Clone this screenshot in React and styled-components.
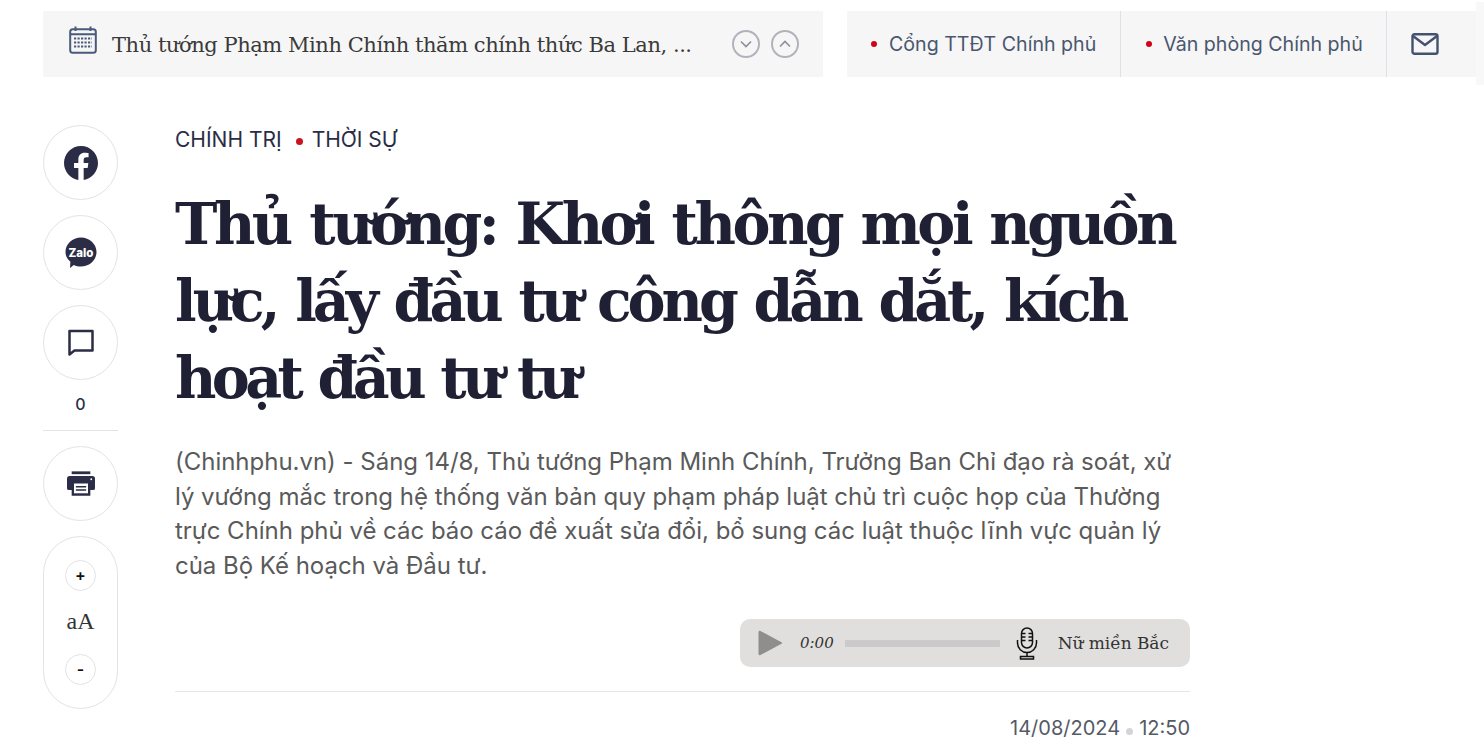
import React from 'react';
import styled, { createGlobalStyle } from 'styled-components';

const GlobalStyle = createGlobalStyle`
  html, body {
    margin: 0;
    padding: 0;
    background: #fff;
    overflow: hidden;
  }
  * { box-sizing: border-box; }
`;

const SERIF = `"DejaVu Serif", "Liberation Serif", serif`;
const SANS = `Inter, "Liberation Sans", sans-serif`;

const App = () => (
  <Page>
    <GlobalStyle />
    <TopBar>
      <NewsBox>
        <CalendarSlot><CalendarIcon /></CalendarSlot>
        <NewsTitle>Thủ tướng Phạm Minh Chính thăm chính thức Ba Lan, ...</NewsTitle>
        <Arrows>
          <RoundArrow><Chevron d="M6 9l6 6 6-6" /></RoundArrow>
          <RoundArrow><Chevron d="M6 15l6-6 6 6" /></RoundArrow>
        </Arrows>
      </NewsBox>
      <LinksBox>
        <LinkCell><Dot />Cổng TTĐT Chính phủ</LinkCell>
        <LinkCell><Dot />Văn phòng Chính phủ</LinkCell>
        <MailCell><MailIcon /></MailCell>
        <EdgeStrip />
      </LinksBox>
    </TopBar>

    <Body>
      <Side>
        <Circle><FacebookIcon /></Circle>
        <Circle><ZaloIcon /></Circle>
        <Circle><CommentIcon /></Circle>
        <Count>0</Count>
        <Rule />
        <Circle><PrintIcon /></Circle>
        <FontPill>
          <SmallCircle>+</SmallCircle>
          <FontLabel>aA</FontLabel>
          <SmallCircle>-</SmallCircle>
        </FontPill>
      </Side>

      <Article>
        <Crumbs>
          <span>CHÍNH TRỊ</span>
          <CrumbDot />
          <span>THỜI SỰ</span>
        </Crumbs>
        <Headline>
          <HeadLine $spacing={-3.5}>Thủ tướng: Khơi thông mọi nguồn</HeadLine>
          <HeadLine $spacing={-4.05}>lực, lấy đầu tư công dẫn dắt, kích</HeadLine>
          <HeadLine $spacing={-4.6}>hoạt đầu tư tư</HeadLine>
        </Headline>
        <Sapo>
          (Chinhphu.vn) - Sáng 14/8, Thủ tướng Phạm Minh Chính, Trưởng Ban Chỉ đạo rà soát, xử<br />
          lý vướng mắc trong hệ thống văn bản quy phạm pháp luật chủ trì cuộc họp của Thường<br />
          trực Chính phủ về các báo cáo đề xuất sửa đổi, bổ sung các luật thuộc lĩnh vực quản lý<br />
          của Bộ Kế hoạch và Đầu tư.
        </Sapo>
        <PlayerRow>
          <Player>
            <PlayIcon />
            <Time>0:00</Time>
            <Track />
            <MicIcon />
            <Voice>Nữ miền Bắc</Voice>
          </Player>
        </PlayerRow>
        <Meta>
          14/08/2024<MetaDot />12:50
        </Meta>
      </Article>
    </Body>
  </Page>
);

export default App;

const CalendarIcon = () => (
  <svg width="28" height="28" viewBox="0 0 28 28" fill="none" stroke="#4a5a7a">
    <rect x="1.2" y="3.2" width="25.6" height="23.6" rx="2.5" strokeWidth="2" />
    <path d="M1.5 8.2h25M6.5 0.500v4.500M21.500 0.500v4.500" strokeWidth="2" />
    <path d="M5 12.500h18M5 16.500h18M5 20.500h18" strokeWidth="2.2" strokeDasharray="2.2 1.3" />
  </svg>
);

const Chevron = ({ d }) => (
  <svg width="20" height="20" viewBox="0 0 24 24" fill="none" stroke="#8f8f9c" strokeWidth="2">
    <path d={d} />
  </svg>
);

const MailIcon = () => (
  <svg width="28" height="22" viewBox="0 0 28 22" fill="none" stroke="#44526f" strokeWidth="2.4" strokeLinejoin="round">
    <rect x="1.500" y="1.300" width="25" height="19.400" rx="2" />
    <path d="M2 3l12 9 12-9" />
  </svg>
);

const FacebookIcon = () => (
  <svg width="34" height="34" viewBox="0 0 24 24" fill="#2a2d45">
    <path d="M24 12.07C24 5.4 18.63 0 12 0S0 5.4 0 12.07c0 6.03 4.39 11.02 10.13 11.93v-8.44H7.08v-3.49h3.05V9.41c0-3.02 1.79-4.69 4.53-4.69 1.31 0 2.68.24 2.68.24v2.96h-1.51c-1.49 0-1.95.93-1.95 1.88v2.27h3.33l-.53 3.49h-2.8V24C19.61 23.09 24 18.1 24 12.07z" />
  </svg>
);

const ZaloIcon = () => (
  <svg width="32" height="32" viewBox="0 0 32 32">
    <path d="M16 0.500C24.600 0.500 31.500 7 31.500 15S24.600 29.500 16 29.500C13.500 29.500 11 29 8.800 27.900L5 31L5.400 24.800C2.300 22.100 0.500 18.800 0.500 15C0.500 7 7.400 0.500 16 0.500Z" fill="#2a2d45" />
    <text x="16" y="19.500" textAnchor="middle" fontFamily="Inter, sans-serif" fontWeight="800" fontSize="11.500" fill="#fff">Zalo</text>
  </svg>
);

const CommentIcon = () => (
  <svg width="28" height="28" viewBox="0 0 28 28" fill="none" stroke="#2a2d45" strokeWidth="2.500" strokeLinejoin="round">
    <path d="M2.500 2h23v19.500H7.500l-5 4z" />
  </svg>
);

const PrintIcon = () => (
  <svg width="28" height="25" viewBox="0 0 30 26">
    <path d="M5 0h20v3H5z" fill="#2a2d45" />
    <path d="M3 5h24a3 3 0 0 1 3 3v10a2 2 0 0 1-2 2h-3v6H5v-6H2a2 2 0 0 1-2-2V8a3 3 0 0 1 3-3z" fill="#2a2d45" />
    <rect x="7.500" y="13" width="15" height="10.500" fill="#fff" />
    <path d="M9.500 16.500h11M9.500 20h11" stroke="#2a2d45" strokeWidth="1.500" />
    <circle cx="26" cy="8.500" r="1" fill="#fff" />
  </svg>
);

const PlayIcon = () => (
  <svg width="24" height="26" viewBox="0 0 24 26">
    <path d="M2.500 1L23 12a1 1 0 0 1 0 2L2.500 25a1.500 1.500 0 0 1-2-1V2a1.500 1.500 0 0 1 2-1z" fill="#8e8e8e" />
  </svg>
);

const MicIcon = () => (
  <svg width="22" height="33" viewBox="0 0 22 33" fill="none" stroke="#111" strokeWidth="1.500">
    <rect x="5.500" y="1" width="11" height="20" rx="5.500" />
    <path d="M5.500 6.500h4M5.500 10h4M5.500 13.500h4M12.500 6.500h4M12.500 10h4M12.500 13.500h4" />
    <path d="M1.500 13v3a9.500 9.500 0 0 0 19 0v-3" />
    <path d="M11 25.500V29M4.500 29.500h13v2.500h-13z" />
  </svg>
);

const Page = styled.div`
  width: 1484px;
  height: 745px;
  overflow: hidden;
  background: #fff;
`;

const TopBar = styled.div`
  display: flex;
  align-items: flex-start;
  gap: 24px;
  padding: 11px 0 0 43px;
`;

const NewsBox = styled.div`
  width: 780px;
  height: 66px;
  background: #f6f6f6;
  display: flex;
  align-items: center;
  padding: 0 24px 0 26px;
`;

const CalendarSlot = styled.div`
  display: flex;
  margin-top: -9px;
`;

const NewsTitle = styled.div`
  flex: 1;
  margin-left: 15px;
  padding-top: 2px;
  font-family: ${SERIF};
  font-size: 21px;
  letter-spacing: -0.45px;
  color: #3a3a3a;
  white-space: nowrap;
`;

const Arrows = styled.div`
  display: flex;
  gap: 11px;
`;

const RoundArrow = styled.div`
  width: 28px;
  height: 28px;
  border: 2px solid #b2b2bc;
  border-radius: 50%;
  display: flex;
  align-items: center;
  justify-content: center;
`;

const LinksBox = styled.div`
  flex: 1;
  height: 66px;
  background: #f6f6f6;
  display: flex;
`;

const LinkCell = styled.div`
  display: flex;
  align-items: center;
  gap: 12px;
  padding: 0 24px;
  font-family: ${SANS};
  font-size: 19.6px;
  color: #4a566f;
  border-right: 1px solid #dfe0ea;
  white-space: nowrap;

  & + & {
    gap: 11px;
    padding: 0 23px 0 25px;
  }
`;

const MailCell = styled.div`
  flex: 1;
  display: flex;
  align-items: center;
  padding-left: 24px;
`;

const EdgeStrip = styled.div`
  width: 8px;
  margin: -9px 0 -8px;
  background: #f8f8f8;
`;

const Dot = styled.span`
  display: inline-block;
  width: 6px;
  height: 6px;
  border-radius: 50%;
  background: #d0021b;
  flex-shrink: 0;
`;

const CrumbDot = styled(Dot)`
  width: 7px;
  height: 7px;
  background: #c8141e;
  margin: 2px 9px 0 14px;
`;

const Body = styled.div`
  display: flex;
  gap: 57px;
  padding: 48px 0 0 43px;
`;

const Side = styled.div`
  width: 75px;
  display: flex;
  flex-direction: column;
  align-items: center;
`;

const Circle = styled.div`
  width: 75px;
  height: 75px;
  border: 1px solid #e3e3e3;
  border-radius: 50%;
  display: flex;
  align-items: center;
  justify-content: center;
  margin-bottom: 15px;
`;

const Count = styled.div`
  font-family: ${SANS};
  font-weight: 500;
  font-size: 16px;
  line-height: 18px;
  color: #2a2d45;
`;

const Rule = styled.div`
  width: 100%;
  height: 1px;
  background: #e3e3e3;
  margin: 17px 0 15px;
`;

const FontPill = styled.div`
  width: 75px;
  height: 173px;
  border: 1px solid #e3e3e3;
  border-radius: 38px;
  display: flex;
  flex-direction: column;
  align-items: center;
  justify-content: space-between;
  padding: 23px 0;
`;

const SmallCircle = styled.div`
  width: 31px;
  height: 31px;
  border: 1px solid #e3e3e3;
  border-radius: 50%;
  display: flex;
  align-items: center;
  justify-content: center;
  padding-bottom: 2px;
  font-family: ${SANS};
  font-weight: 600;
  font-size: 16px;
  color: #111;
`;

const FontLabel = styled.div`
  font-family: "Liberation Serif", serif;
  font-size: 24px;
  margin-top: -2px;
  color: #333;
`;

const Article = styled.div`
  width: 1015px;
`;

const Crumbs = styled.div`
  display: flex;
  align-items: center;
  font-family: ${SANS};
  font-size: 21px;
  line-height: 30px;
  color: #2a2d45;
`;

const Headline = styled.h1`
  margin: 30px 0 0;
  font-family: ${SERIF};
  font-weight: 700;
  font-size: 57px;
  line-height: 77px;
  word-spacing: 3px;
  color: #1f2033;
  white-space: nowrap;
`;

const HeadLine = styled.span`
  display: block;
  letter-spacing: ${(p) => p.$spacing}px;
`;

const Sapo = styled.div`
  margin-top: 29px;
  font-family: ${SANS};
  font-size: 24px;
  line-height: 34.500px;
  letter-spacing: -0.02px;
  color: #5a5a5a;
  white-space: nowrap;
`;

const PlayerRow = styled.div`
  display: flex;
  justify-content: flex-end;
  margin-top: 36px;
  padding-bottom: 24px;
  border-bottom: 1px solid #e6e6e6;
`;

const Player = styled.div`
  width: 450px;
  height: 48px;
  background: #e0dfde;
  border-radius: 10px;
  display: flex;
  align-items: center;
  padding: 0 21px 0 18px;
`;

const Time = styled.span`
  margin-left: 18px;
  font-family: ${SERIF};
  font-style: italic;
  font-size: 15px;
  color: #333;
`;

const Track = styled.div`
  width: 155px;
  height: 7px;
  background: #cbc9c9;
  margin: 0 16px 0 11px;
`;

const Voice = styled.span`
  margin-left: 20px;
  font-family: ${SERIF};
  font-size: 17px;
  letter-spacing: -0.05px;
  color: #333;
  white-space: nowrap;
`;

const Meta = styled.div`
  display: flex;
  justify-content: flex-end;
  align-items: center;
  margin-top: 22px;
  font-family: ${SANS};
  font-size: 20px;
  line-height: 28px;
  color: #555a66;
`;

const MetaDot = styled.span`
  width: 7px;
  height: 7px;
  border-radius: 50%;
  background: #d4d4d8;
  margin: 6px 6px 0;
`;
